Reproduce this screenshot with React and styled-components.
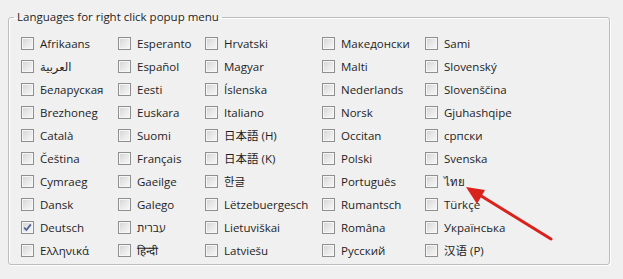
import styled, { createGlobalStyle } from "styled-components";

const GlobalStyle = createGlobalStyle`
  html, body {
    margin: 0;
    padding: 0;
    background: #f0f0f0;
  }
  body {
    font-family: "Open Sans", "DejaVu Sans", "Noto Sans CJK JP", sans-serif;
    font-size: 11.5px;
    color: #1e1e1e;
  }
`;

const LANGUAGES = [
  ["Afrikaans", "Esperanto", "Hrvatski", "Македонски", "Sami"],
  ["العربية", "Español", "Magyar", "Malti", "Slovenský"],
  ["Беларуская", "Eesti", "Íslenska", "Nederlands", "Slovenščina"],
  ["Brezhoneg", "Euskara", "Italiano", "Norsk", "Gjuhashqipe"],
  ["Català", "Suomi", "日本語 (H)", "Occitan", "српски"],
  ["Čeština", "Français", "日本語 (K)", "Polski", "Svenska"],
  ["Cymraeg", "Gaeilge", "한글", "Português", "ไทย"],
  ["Dansk", "Galego", "Lëtzebuergesch", "Rumantsch", "Türkçe"],
  ["Deutsch", "עברית", "Lietuviškai", "Româna", "Українська"],
  ["Ελληνικά", "हिन्दी", "Latviešu", "Русский", "汉语 (P)"],
];

const CHECKED = ["Deutsch"];

const Page = styled.div`
  position: relative;
  width: 623px;
  height: 279px;
  padding: 9px 0 0 8px;
  box-sizing: border-box;
`;

const Group = styled.fieldset`
  width: 602px;
  margin: 0;
  padding: 7px 0 2px 12px;
  box-sizing: border-box;
  border: 1px solid #bdbdbd;
  border-radius: 3px;
  box-shadow: 1px 1px 0 #ffffff, inset 1px 1px 0 #ffffff;
`;

const Legend = styled.legend`
  margin-left: -7px;
  padding: 0 3px;
  line-height: 16px;
  color: #1e1e1e;
`;

const Grid = styled.div`
  display: grid;
  grid-template-columns: 97px 87px 117px 103px 1fr;
  grid-auto-rows: 23px;
`;

const Item = styled.label`
  display: flex;
  align-items: center;
  gap: 6px;
  white-space: nowrap;
  line-height: 16px;
`;

const Box = styled.span`
  flex: none;
  display: flex;
  align-items: center;
  justify-content: center;
  width: 13px;
  height: 13px;
  box-sizing: border-box;
  border: 1px solid #8e8f8f;
  background: linear-gradient(135deg, #d2d2d2 0%, #e8e8e8 50%, #f8f8f8 100%);
  box-shadow: inset 0 0 0 1px #f6f6f6;
`;

const Arrow = styled.svg`
  position: absolute;
  left: 0;
  top: 0;
  pointer-events: none;
`;

function Check({ checked }) {
  return (
    <Box>
      {checked && (
        <svg width="9" height="9" viewBox="0 0 9 9">
          <path
            d="M1.2 4.6 L3.4 7 L7.8 1.4"
            fill="none"
            stroke="#4a5f97"
            strokeWidth="1.7"
          />
        </svg>
      )}
    </Box>
  );
}

export default function App() {
  return (
    <>
      <GlobalStyle />
      <Page>
        <Group>
          <Legend>Languages for right click popup menu</Legend>
          <Grid>
            {LANGUAGES.flat().map((name) => (
              <Item key={name}>
                <Check checked={CHECKED.includes(name)} />
                <span>{name}</span>
              </Item>
            ))}
          </Grid>
        </Group>
        <Arrow width="623" height="279" viewBox="0 0 623 279">
          <line
            x1="551"
            y1="239"
            x2="478"
            y2="194"
            stroke="#d9221c"
            strokeWidth="3"
            strokeLinecap="round"
          />
          <polygon points="466,187 485,190 477,204" fill="#d9221c" />
        </Arrow>
      </Page>
    </>
  );
}
